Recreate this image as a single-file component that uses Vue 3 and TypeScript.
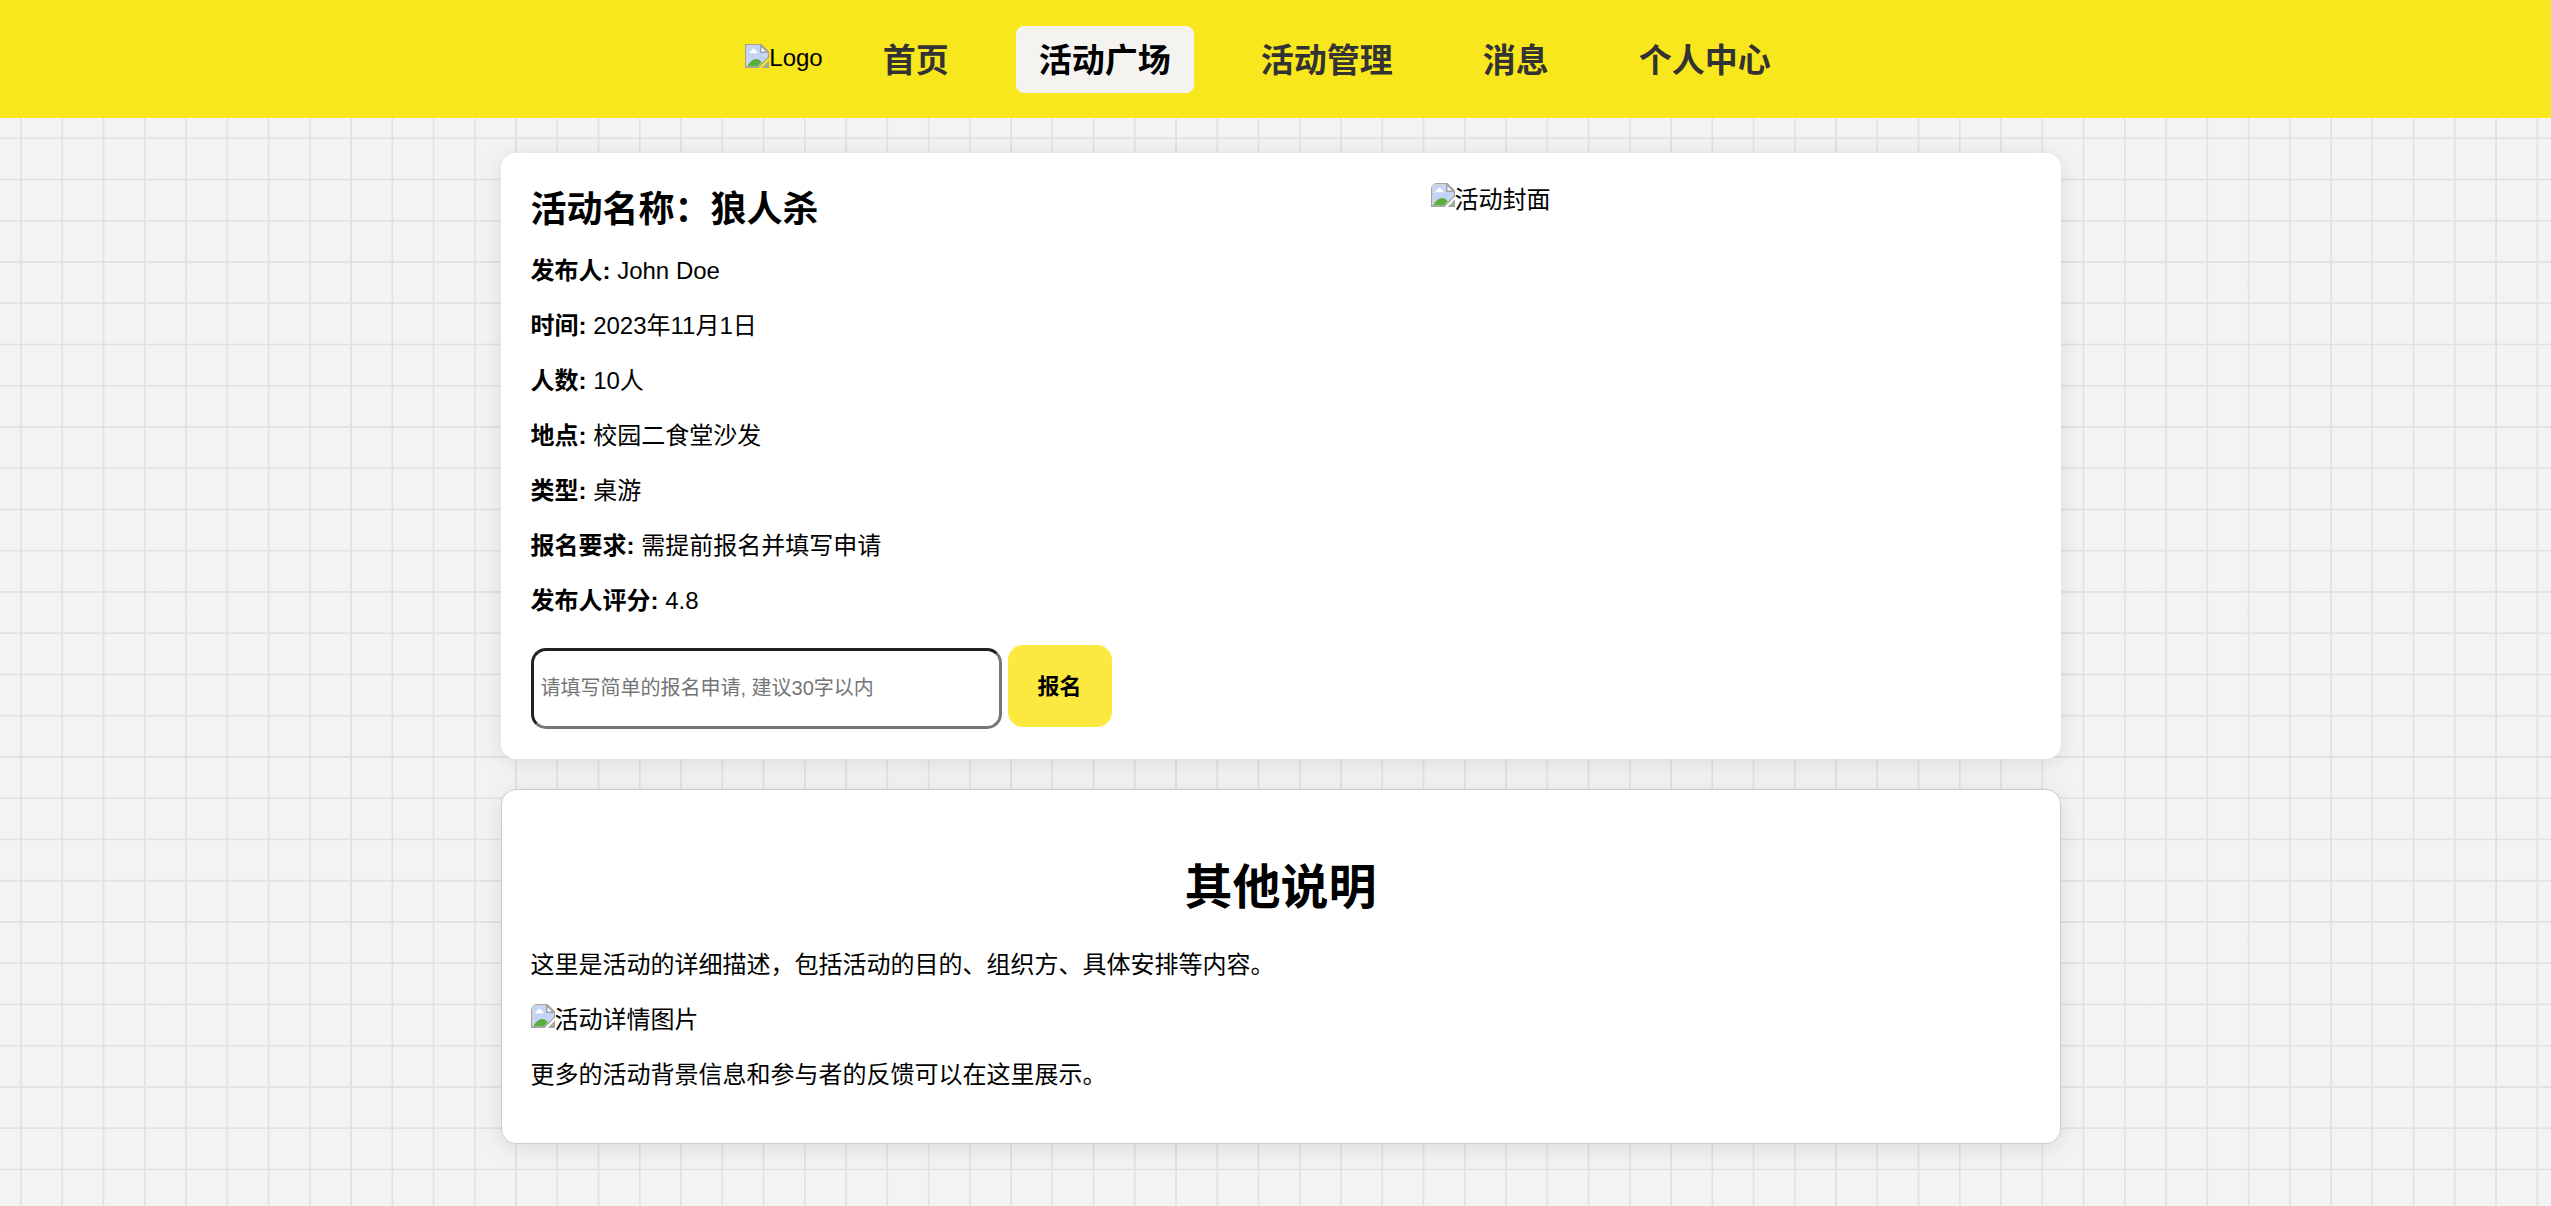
<script setup lang="ts">
import { defineComponent, h, ref } from 'vue'

interface NavItem {
  label: string
  active?: boolean
}

interface Detail {
  label: string
  value: string
}

const navItems: NavItem[] = [
  { label: '首页' },
  { label: '活动广场', active: true },
  { label: '活动管理' },
  { label: '消息' },
  { label: '个人中心' },
]

const details: Detail[] = [
  { label: '发布人:', value: 'John Doe' },
  { label: '时间:', value: '2023年11月1日' },
  { label: '人数:', value: '10人' },
  { label: '地点:', value: '校园二食堂沙发' },
  { label: '类型:', value: '桌游' },
  { label: '报名要求:', value: '需提前报名并填写申请' },
  { label: '发布人评分:', value: '4.8' },
]

const application = ref('')

// Placeholder glyph shown beside the alternative text of a missing picture
const MissingPicture = defineComponent({
  setup: () => () =>
    h('svg', { viewBox: '0 0 16 16', width: 24, height: 24, 'aria-hidden': 'true' }, [
      h('path', { d: 'M0 0H11L16 5V9L9 16H0Z', fill: '#a3a3a3' }),
      h('path', { d: 'M1 1H10.5L15 5.5V8.6L8.6 15H1Z', fill: '#fff' }),
      h('path', { d: 'M1.4 1.4H10V6H14.6V9L8.4 15H1.4Z', fill: '#c3d5f6' }),
      h('path', { d: 'M10.5 1V5.5H15Z', fill: '#fff', stroke: '#a3a3a3', 'stroke-width': 1 }),
      h('path', { d: 'M2.8 6.1Q2.8 4.9 4 4.8Q4.3 3.2 5.6 3.2Q6.9 3.2 7.2 4.7Q8.4 4.8 8.4 6.1Z', fill: '#fff' }),
      h('path', { d: 'M1.4 15Q4 10 7.6 10Q9.6 10 11.2 12.2L8.4 15Z', fill: '#5aae3a' }),
      h('path', { d: 'M0 15H9.9L9 16H0Z', fill: '#a3a3a3' }),
      h('path', { d: 'M16 11V16H11.2Z', fill: '#a3a3a3' }),
      h('path', { d: 'M15 12.6V15H12.7Z', fill: '#8fc47a' }),
    ]),
})
</script>

<template>
  <div class="page" lang="zh-CN">
    <header class="topbar">
      <span class="missing logo" role="img" aria-label="Logo"><MissingPicture /><span>Logo</span></span>
      <nav class="nav">
        <a
          v-for="item in navItems"
          :key="item.label"
          href="#"
          class="nav-link"
          :class="{ active: item.active }"
        >{{ item.label }}</a>
      </nav>
    </header>

    <main class="content">
      <section class="card activity">
        <div class="info">
          <h2>活动名称：狼人杀</h2>
          <p v-for="item in details" :key="item.label">
            <strong>{{ item.label }}</strong> {{ item.value }}
          </p>
          <form class="apply" @submit.prevent>
            <input
              v-model="application"
              type="text"
              aria-label="报名申请"
              placeholder="请填写简单的报名申请, 建议30字以内"
            />
            <button type="submit">报名</button>
          </form>
        </div>
        <div class="cover">
          <span class="missing rounded" role="img" aria-label="活动封面"><MissingPicture /><span>活动封面</span></span>
        </div>
      </section>

      <section class="card notes">
        <h1>其他说明</h1>
        <p>这里是活动的详细描述，包括活动的目的、组织方、具体安排等内容。</p>
        <p>
          <span class="missing rounded" role="img" aria-label="活动详情图片"><MissingPicture /><span>活动详情图片</span></span>
        </p>
        <p>更多的活动背景信息和参与者的反馈可以在这里展示。</p>
      </section>
    </main>
  </div>
</template>

<style>
body {
  margin: 0;
}
</style>

<style scoped>
.page {
  display: flex;
  flex-direction: column;
  min-height: 100vh;
  font-family: "Liberation Sans", "Noto Sans CJK SC", sans-serif;
  font-size: 24px;
  line-height: 31px;
  color: #000;
}

.topbar {
  display: flex;
  align-items: center;
  justify-content: center;
  gap: 37px;
  box-sizing: border-box;
  min-height: 118px;
  padding: 0 12px 0 0;
  background: #f9e71e;
}

.nav {
  display: flex;
  gap: 44px;
}

.nav-link {
  padding: 13px 23px 11px;
  border-radius: 8px;
  color: #333;
  font-size: 33px;
  font-weight: bold;
  line-height: 43px;
  text-decoration: none;
}

.nav-link.active {
  background: #f5f3f0;
  color: #000;
}

.missing {
  display: flex;
  align-items: flex-start;
}

.missing svg {
  flex: none;
}

.logo {
  padding-bottom: 3px;
  line-height: 27px;
}

.missing.rounded svg {
  border-top-left-radius: 6px;
}

.content {
  --grid-stops: transparent 12%, #e1e1e1 12.5%, #e1e1e1 13%, transparent 13.5%,
    transparent 37%, #e1e1e1 37.5%, #e1e1e1 38%, transparent 38.5%,
    transparent 62%, #e1e1e1 62.5%, #e1e1e1 63%, transparent 63.5%,
    transparent 87%, #e1e1e1 87.5%, #e1e1e1 88%, transparent 88.5%;
  flex: 1;
  display: flex;
  flex-direction: column;
  align-items: center;
  gap: 30px;
  padding: 35px 0 35px 10px;
  background-color: #f3f3f3;
  background-image:
    linear-gradient(0deg, var(--grid-stops)),
    linear-gradient(90deg, var(--grid-stops));
  background-size: 165px 165px;
}

.card {
  box-sizing: border-box;
  width: 100%;
  max-width: 1560px;
  padding: 30px;
  border-radius: 15px;
  background: #fff;
  box-shadow: 0 4px 24px rgba(0, 0, 0, 0.1);
}

.activity {
  display: flex;
}

.info {
  flex: 3;
}

.cover {
  flex: 2;
  line-height: 33px;
}

h2 {
  margin: 0 0 21px;
  padding-top: 3px;
  font-size: 36px;
  line-height: 48px;
}

p {
  margin: 0 0 24px;
}

.apply {
  display: flex;
  align-items: flex-start;
  gap: 6px;
  margin-top: 29px;
}

.apply input {
  box-sizing: border-box;
  width: 471px;
  height: 81px;
  margin: 3px 0 0;
  padding: 0 7px;
  border: 3px inset #767676;
  border-radius: 15px;
  background: #fff;
  font-family: inherit;
  font-size: 20px;
}

.apply input::placeholder {
  color: #757575;
}

.apply button {
  padding: 26px 30px 24px;
  border: 0;
  border-radius: 15px;
  background: #fbe93f;
  color: #000;
  font-family: inherit;
  font-size: 22px;
  font-weight: bold;
  line-height: 32px;
}

.notes {
  padding: 30px 29px 29px;
  border: 1px solid #ccc;
}

h1 {
  margin: 35px 0 29px;
  font-size: 48px;
  line-height: 65px;
  text-align: center;
}
</style>
